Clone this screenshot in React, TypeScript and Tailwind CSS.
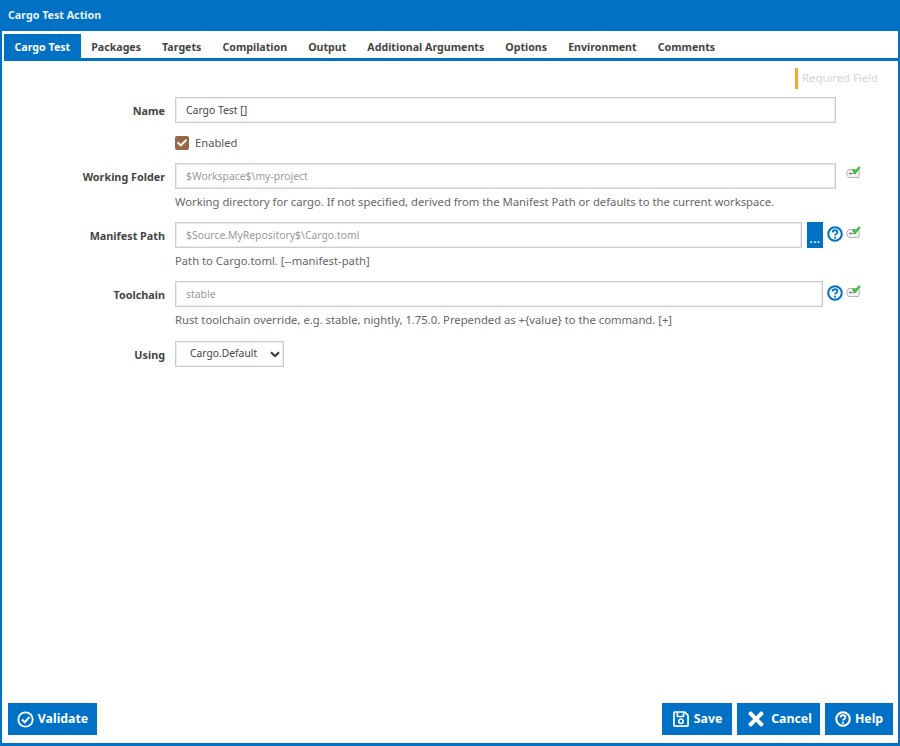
import { FaCheck, FaRegSave, FaTimes } from "react-icons/fa";

const font = { fontFamily: '"Noto Sans", "Open Sans", sans-serif' };

const tabs = ["Cargo Test", "Packages", "Targets", "Compilation", "Output", "Additional Arguments", "Options", "Environment", "Comments"];

function HelpIcon({ size = 16, color = "#0071c5" }: { size?: number; color?: string }) {
    return (
        <svg width={size} height={size} viewBox="0 0 17 17" className="shrink-0">
            <circle cx="8.5" cy="8.5" r="7.2" fill="none" stroke={color} strokeWidth="2.2" />
            <path d="M5.9 6.9c0-1.6 1.2-2.4 2.6-2.4s2.6.8 2.6 2.2c0 1.9-2.5 1.8-2.5 3.5" fill="none" stroke={color} strokeWidth="1.9" />
            <rect x="7.5" y="11.4" width="2" height="2" fill={color} />
        </svg>
    );
}

function VariableIcon() {
    return (
        <svg width="15" height="13" viewBox="0 0 15 13" className="shrink-0">
            <path d="M0.8 6.5 L2.5 3.5 H12.5 Q13.2 3.5 13.2 4.5 V10.5 Q13.2 11.5 12.2 11.5 H2.5 L0.8 8.5 Z" fill="#f2f2f2" stroke="#b5b5b5" strokeWidth="1" />
            <path d="M3 7.5 H9.5 M4.5 6.2 V8.8" stroke="#8a8a8a" strokeWidth="1" fill="none" />
            <path d="M6.8 3.6 L9.2 6.4 L13.8 0.9" stroke="#3dbb3d" strokeWidth="2.4" fill="none" />
        </svg>
    );
}

function FieldRow({ label, value, hint, browse, help }: { label: string; value: string; hint?: string; browse?: boolean; help?: boolean }) {
    return (
        <div className="flex">
            <div className="w-[165px] pt-[5px] text-right text-[10.8px] leading-[18px] font-bold text-[#444]">{label}</div>
            <div className="ml-[10px] flex-1">
                <div className="flex items-start">
                    <div className={`h-[26px] border border-[#cccccc] pl-[10px] text-[10.4px] leading-[24px] text-[#999] shadow-[inset_0_0_0_1px_#ececec] ${browse ? "w-[627px]" : help ? "w-[648px]" : "w-[661px]"}`}>
                        {value}
                    </div>
                    {browse && (
                        <div className="ml-[5px] flex h-[26px] w-[16px] items-end justify-center bg-[#0071c5] pb-[4px] text-[11px] leading-[11px] font-bold tracking-[0.5px] text-white">...</div>
                    )}
                    {help && (
                        <div className="mt-[4px] ml-[4px]">
                            <HelpIcon />
                        </div>
                    )}
                    <div className={help ? "mt-[4px] ml-[3px]" : "mt-[3px] ml-[10px]"}>
                        <VariableIcon />
                    </div>
                </div>
                {hint && <div className="mt-[4px] text-[11.25px] leading-[18px] text-[#666]">{hint}</div>}
            </div>
        </div>
    );
}

function FooterButton({ icon, label, width }: { icon: React.ReactNode; label: string; width: string }) {
    return (
        <div className={`flex h-[32px] items-center justify-center gap-[4px] bg-[#0071c5] text-[12.3px] font-bold text-white ${width}`}>
            {icon}
            <span>{label}</span>
        </div>
    );
}

export default function App() {
    return (
        <div style={font} className="flex h-[746px] w-[900px] flex-col overflow-hidden bg-white">
            <div className="flex h-[31px] shrink-0 items-center bg-[#0071c5] pl-[8px] text-[10.7px] font-bold text-[#e8f1f9]">Cargo Test Action</div>
            <div className="flex flex-1 flex-col border-x-2 border-b-[3px] border-[#0071c5]">
                <div className="mt-[3px] ml-[2px] flex h-[27px] border-b-[3px] border-[#0071c5]">
                    {tabs.map((t, i) => (
                        <div key={t} className={`flex h-[24px] items-center px-[10.5px] pt-[3px] text-[10.65px] font-bold ${i === 0 ? "bg-[#0071c5] text-white" : "text-[#444]"}`}>
                            {t}
                        </div>
                    ))}
                </div>

                <div className="mt-[7px] mr-[20px] flex justify-end">
                    <div className="flex h-[21px] items-center border-l-[3px] border-[#f9a533] pl-[4px] text-[11.3px] text-[#d5d5d5]">Required Field</div>
                </div>

                <div className="mt-[8px] flex flex-col">
                    <div className="flex">
                        <div className="w-[163px] pt-[5px] text-right text-[10.8px] leading-[18px] font-bold text-[#444]">Name</div>
                        <div className="ml-[10px] h-[26px] w-[661px] border border-[#cccccc] pl-[10px] text-[10.4px] leading-[24px] text-[#444] shadow-[inset_0_0_0_1px_#ececec]">Cargo Test []</div>
                    </div>

                    <div className="mt-[11px] ml-[173px] flex h-[18px] items-center">
                        <div className="flex h-[14px] w-[14px] items-center justify-center rounded-[2px] bg-[#99674a]">
                            <FaCheck className="text-[10px] text-white" />
                        </div>
                        <span className="ml-[6px] text-[11.2px] text-[#555]">Enabled</span>
                    </div>

                    <div className="mt-[11px] -ml-[2px]">
                        <FieldRow label="Working Folder" value="$Workspace$\my-project" hint="Working directory for cargo. If not specified, derived from the Manifest Path or defaults to the current workspace." />
                    </div>
                    <div className="mt-[11px] -ml-[2px]">
                        <FieldRow label="Manifest Path" value="$Source.MyRepository$\Cargo.toml" hint="Path to Cargo.toml. [--manifest-path]" browse help />
                    </div>
                    <div className="mt-[11px] -ml-[2px]">
                        <FieldRow label="Toolchain" value="stable" hint="Rust toolchain override, e.g. stable, nightly, 1.75.0. Prepended as +{value} to the command. [+]" help />
                    </div>

                    <div className="mt-[12px] flex">
                        <div className="w-[163px] pt-[5px] text-right text-[10.8px] leading-[18px] font-bold text-[#444]">Using</div>
                        <div className="ml-[10px] flex h-[26px] w-[109px] items-center justify-between border border-[#cccccc] pr-[3px] pl-[14px] text-[10.3px] text-[#444] shadow-[inset_0_0_0_1px_#ececec]">
                            <span>Cargo.Default</span>
                            <svg width="10" height="7" viewBox="0 0 10 7">
                                <path d="M1 1.2 L5 5.2 L9 1.2" fill="none" stroke="#333" strokeWidth="2" />
                            </svg>
                        </div>
                    </div>
                </div>

                <div className="mt-auto mb-[8px] flex justify-between pr-[5px] pl-[6px]">
                    <FooterButton
                        width="w-[89px]"
                        icon={
                            <svg width="17" height="17" viewBox="0 0 17 17">
                                <circle cx="8.5" cy="8.5" r="7.2" fill="none" stroke="white" strokeWidth="1.8" />
                                <path d="M5 8.5 L7.8 11.2 L12.5 5.8" fill="none" stroke="white" strokeWidth="2" />
                            </svg>
                        }
                        label="Validate"
                    />
                    <div className="flex gap-[5px]">
                        <FooterButton width="w-[70px]" icon={<FaRegSave className="text-[18px]" />} label="Save" />
                        <FooterButton width="w-[83px]" icon={<FaTimes className="text-[22px]" />} label="Cancel" />
                        <FooterButton width="w-[68px]" icon={<HelpIcon size={16} color="white" />} label="Help" />
                    </div>
                </div>
            </div>
        </div>
    );
}
